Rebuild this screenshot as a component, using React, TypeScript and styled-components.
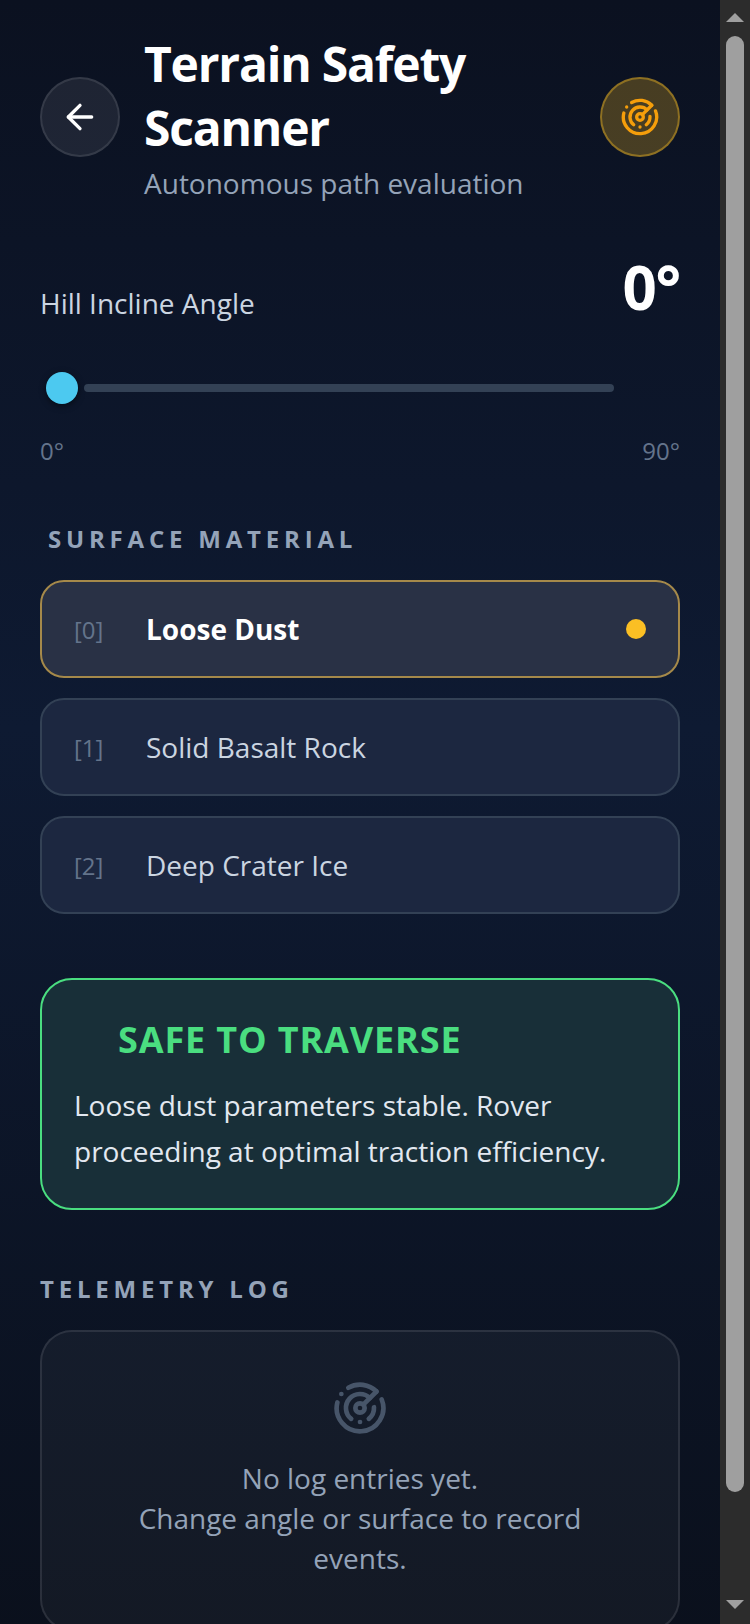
import React, { useState } from 'react';
import styled, { createGlobalStyle } from 'styled-components';
import { ArrowLeft, Radar } from 'lucide-react';

const GlobalStyle = createGlobalStyle`
  html, body {
    margin: 0;
    height: 100%;
    overflow: hidden;
    background: #0a0f1c;
    font-family: "Open Sans", "Noto Sans", sans-serif;
  }
`;

const Frame = styled.div`
  display: flex;
  height: 1624px;
  overflow: hidden;
`;

const Screen = styled.main`
  box-sizing: border-box;
  flex: 1;
  min-width: 0;
  height: 1731px;
  padding: 32px 40px 0;
  background: linear-gradient(180deg, #0b1120 0%, #0e1a32 42%, #0a0f1a 100%);
`;

const ScrollBar = styled.div`
  flex: none;
  width: 30px;
  height: 1624px;
  display: flex;
  flex-direction: column;
  align-items: center;
  background: #2c2c2c;
`;

const ScrollArrow = styled.svg<{ $down?: boolean }>`
  flex: none;
  width: 18px;
  height: 9px;
  margin: ${(p) => (p.$down ? '108px 0 0' : '13px 0 14px')};
  fill: #9f9f9f;
`;

const ScrollThumb = styled.div`
  flex: none;
  width: 18px;
  height: 1456px;
  border-radius: 9px;
  background: #9f9f9f;
`;

const Header = styled.header`
  display: flex;
  align-items: center;
  gap: 24px;
  margin-bottom: 44px;
`;

const RoundButton = styled.button<{ $accent?: boolean }>`
  flex: none;
  width: 80px;
  height: 80px;
  display: flex;
  align-items: center;
  justify-content: center;
  padding: 0;
  border-radius: 50%;
  color: ${(p) => (p.$accent ? '#f59e0b' : '#fff')};
  background: ${(p) => (p.$accent ? 'rgba(251, 191, 36, 0.25)' : 'rgba(255, 255, 255, 0.08)')};
  border: 2px solid ${(p) => (p.$accent ? 'rgba(251, 191, 36, 0.4)' : 'rgba(255, 255, 255, 0.1)')};
`;

const TitleBlock = styled.div`
  flex: 1;
`;

const Title = styled.h1`
  margin: 0;
  font-size: 48px;
  line-height: 64px;
  font-weight: 700;
  letter-spacing: -1.2px;
  color: #fff;
`;

const Subtitle = styled.p`
  margin: 4px 0 0;
  font-size: 28px;
  line-height: 38px;
  color: #94a3b8;
`;

const AngleRow = styled.div`
  display: flex;
  align-items: flex-end;
  justify-content: space-between;
`;

const AngleLabel = styled.span`
  font-size: 28px;
  line-height: 38px;
  color: #cbd5e1;
  margin-bottom: 6px;
`;

const AngleValue = styled.span`
  font-size: 60px;
  line-height: 82px;
  font-weight: 700;
  letter-spacing: -1.2px;
  color: #fff;
`;

const SliderWrap = styled.div`
  position: relative;
  height: 32px;
  margin: 44px 66px 0 0;
  display: flex;
  align-items: center;
  padding-left: 44px;
`;

const Track = styled.div`
  flex: 1;
  height: 8px;
  border-radius: 4px;
  background: #334155;
`;

const Thumb = styled.div`
  position: absolute;
  left: 6px;
  top: 0;
  width: 32px;
  height: 32px;
  border-radius: 50%;
  background: #4cc9f0;
  box-shadow: 0 2px 6px rgba(0, 0, 0, 0.5);
`;

const Scale = styled.div`
  display: flex;
  justify-content: space-between;
  margin: 31px 0 56px;
  font-size: 24px;
  line-height: 32px;
  color: #64748b;
`;

const SectionLabel = styled.h2<{ $indent?: boolean }>`
  margin: 0;
  padding-left: ${(p) => (p.$indent ? '8px' : '0')};
  font-size: 24px;
  line-height: 32px;
  font-weight: 700;
  letter-spacing: 4.8px;
  text-transform: uppercase;
  color: #94a3b8;
`;

const Options = styled.div`
  display: flex;
  flex-direction: column;
  gap: 20px;
  margin-top: 25px;
`;

const Option = styled.button<{ $active?: boolean }>`
  box-sizing: border-box;
  height: 98px;
  display: flex;
  align-items: center;
  padding: 0 32px;
  border-radius: 24px;
  font-family: inherit;
  text-align: left;
  background: ${(p) => (p.$active ? '#293145' : '#1c2740')};
  border: 2px solid ${(p) => (p.$active ? '#a5894a' : '#334155')};
`;

const OptionIndex = styled.span`
  width: 72px;
  font-size: 24px;
  color: #64748b;
`;

const OptionName = styled.span<{ $active?: boolean }>`
  flex: 1;
  font-size: 28px;
  font-weight: ${(p) => (p.$active ? 700 : 400)};
  color: ${(p) => (p.$active ? '#fff' : '#cbd5e1')};
`;

const Dot = styled.span`
  width: 20px;
  height: 20px;
  border-radius: 50%;
  background: #fbbf24;
`;

const StatusCard = styled.section`
  box-sizing: border-box;
  height: 232px;
  margin-top: 64px;
  padding: 36px 32px 0;
  border-radius: 32px;
  background: #182f38;
  border: 2px solid #4ade80;
`;

const StatusTitle = styled.h3`
  margin: 0 0 0 44px;
  font-size: 36px;
  line-height: 48px;
  font-weight: 700;
  letter-spacing: 0.87px;
  color: #4ade80;
`;

const StatusText = styled.p`
  margin: 18px 0 0;
  font-size: 28px;
  line-height: 46px;
  color: #e2e8f0;
`;

const LogSection = styled.section`
  margin-top: 63px;
`;

const EmptyLog = styled.div`
  box-sizing: border-box;
  height: 301px;
  margin-top: 25px;
  padding: 48px 60px 0;
  display: flex;
  flex-direction: column;
  align-items: center;
  text-align: center;
  border-radius: 32px;
  background: rgba(255, 255, 255, 0.04);
  border: 2px solid rgba(255, 255, 255, 0.1);
`;

const EmptyText = styled.p`
  margin: 22px 0 0;
  font-size: 28px;
  line-height: 40px;
  color: #94a3b8;
`;

const materials = ['Loose Dust', 'Solid Basalt Rock', 'Deep Crater Ice'];

const App: React.FC = () => {
  const [active, setActive] = useState(0);

  return (
    <Frame>
      <GlobalStyle />
      <Screen>
        <Header>
          <RoundButton aria-label="Back">
            <ArrowLeft size={40} strokeWidth={2} />
          </RoundButton>
          <TitleBlock>
            <Title>Terrain Safety Scanner</Title>
            <Subtitle>Autonomous path evaluation</Subtitle>
          </TitleBlock>
          <RoundButton $accent aria-label="Scan">
            <Radar size={40} strokeWidth={2} />
          </RoundButton>
        </Header>

        <AngleRow>
          <AngleLabel>Hill Incline Angle</AngleLabel>
          <AngleValue>0°</AngleValue>
        </AngleRow>
        <SliderWrap>
          <Track />
          <Thumb />
        </SliderWrap>
        <Scale>
          <span>0°</span>
          <span>90°</span>
        </Scale>

        <SectionLabel $indent>Surface Material</SectionLabel>
        <Options>
          {materials.map((name, i) => (
            <Option key={name} $active={i === active} onClick={() => setActive(i)}>
              <OptionIndex>[{i}]</OptionIndex>
              <OptionName $active={i === active}>{name}</OptionName>
              {i === active && <Dot />}
            </Option>
          ))}
        </Options>

        <StatusCard>
          <StatusTitle>SAFE TO TRAVERSE</StatusTitle>
          <StatusText>
            Loose dust parameters stable. Rover proceeding at optimal traction efficiency.
          </StatusText>
        </StatusCard>

        <LogSection>
          <SectionLabel>Telemetry Log</SectionLabel>
          <EmptyLog>
            <Radar size={56} color="#475569" strokeWidth={2} />
            <EmptyText>No log entries yet.<br />Change angle or surface to record events.</EmptyText>
          </EmptyLog>
        </LogSection>
      </Screen>
      <ScrollBar>
        <ScrollArrow viewBox="0 0 18 9"><path d="M9 0l9 9H0z" /></ScrollArrow>
        <ScrollThumb />
        <ScrollArrow $down viewBox="0 0 18 9"><path d="M0 0h18l-9 9z" /></ScrollArrow>
      </ScrollBar>
    </Frame>
  );
};

export default App;
